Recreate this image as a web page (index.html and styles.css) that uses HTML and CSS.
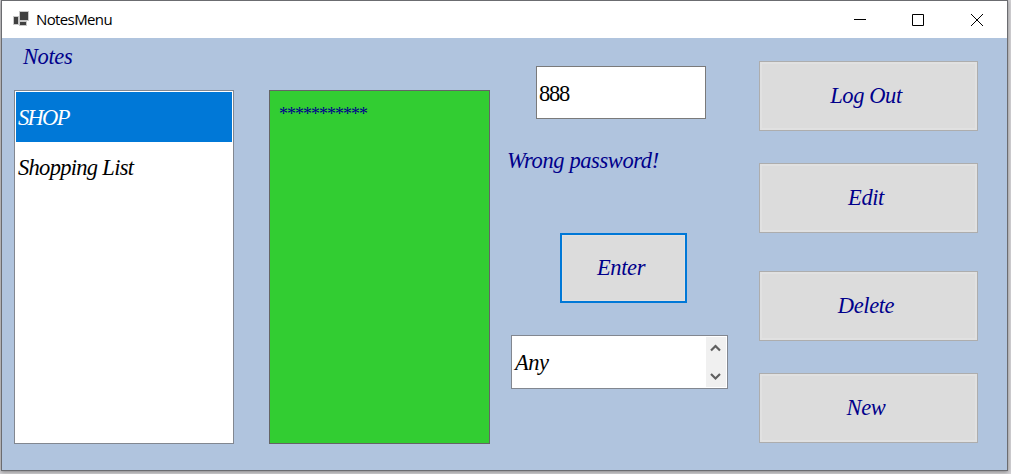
FILE: index.html
```html
<!DOCTYPE html>
<html lang="en">
<head>
<meta charset="utf-8">
<title>NotesMenu</title>
<link rel="stylesheet" href="styles.css">
</head>
<body>
<div class="window">
  <header class="titlebar">
    <svg class="app-icon" width="18" height="16" viewBox="0 0 18 16">
      <path fill="#c8c8c8" d="M0 5h6V0h10v10h-2v5H6v-1H0z"/>
      <path fill="#404040" d="M7 1h8v8H7zM1 6h4v7H1zM7 11h6v3H7z"/>
    </svg>
    <span class="title">NotesMenu</span>
    <svg class="controls" width="130" height="12" viewBox="0 0 130 12" fill="none" stroke="#000">
      <path d="M0 5.5h12M58.5.5h11v11h-11z"/>
      <path d="M117 0l12 12M129 0l-12 12"/>
    </svg>
  </header>
  <main class="form">
    <section class="notes">
      <div class="label notes-label">Notes</div>
      <div class="listbox">
        <div class="item selected">SHOP</div>
        <div class="item">Shopping List</div>
      </div>
    </section>
    <section class="preview">***********</section>
    <section class="password">
      <div class="field">888</div>
      <div class="label message">Wrong password!</div>
      <button class="button enter">Enter</button>
      <div class="spinner">
        <span class="spinner-value">Any</span>
        <svg class="arrows" width="20" height="50" viewBox="0 0 20 50" fill="none" stroke="#606060" stroke-width="2.2">
          <path d="M5 13.500L9.500 9l4.500 4.500M5 37l4.500 4.500L14 37"/>
        </svg>
      </div>
    </section>
    <nav class="actions">
      <button class="button">Log Out</button>
      <button class="button">Edit</button>
      <button class="button delete">Delete</button>
      <button class="button">New</button>
    </nav>
  </main>
</div>
</body>
</html>
```
FILE: styles.css
```css
* { box-sizing: border-box; }
body {
  margin: 0;
  height: 474px;
  padding-left: 1px;
  overflow: hidden;
  background: #d4d3d6;
  font: italic 22.5px/28px "Liberation Serif", serif;
}
.window {
  width: 1007px;
  height: 471px;
  border: 1px solid #6b6c70;
  background: #b0c4de;
  box-shadow: 0 1px 4px rgba(0, 0, 0, .4);
}
.titlebar {
  height: 37px;
  background: #fff;
  display: flex;
  align-items: center;
  padding: 0 23px 0 11px;
}
.app-icon { margin-top: -1px; }
.title {
  margin: -2px 0 0 5px;
  font: 15px/20px "Open Sans", "Noto Sans", sans-serif;
  letter-spacing: -.62px;
  color: #000;
}
.controls { margin-left: auto; }
.form { display: flex; height: 432px; }
.label { color: #00008b; white-space: nowrap; }
.notes { width: 220px; margin-left: 12px; }
.notes-label { height: 52px; padding: 5px 0 0 9px; letter-spacing: -.4px; }
.listbox {
  height: 354px;
  border: 1px solid #828790;
  padding: 1px;
  background: #fff;
}
.item { height: 50px; padding: 12px 0 0 2px; color: #000; letter-spacing: -.7px; }
.selected { background: #0078d7; color: #fff; letter-spacing: -1.7px; }
.preview {
  width: 221px;
  height: 354px;
  margin: 52px 0 0 35px;
  border: 1px solid #646464;
  background: #32cd32;
  color: #00008b;
  padding: 11px 0 0 9px;
  font: 18px/24px "Liberation Serif", serif;
  letter-spacing: -1px;
}
.password { width: 221px; margin: 28px 0 0 17px; }
.field {
  width: 170px;
  height: 53px;
  margin-left: 29px;
  border: 1px solid #7a7a7a;
  background: #fff;
  padding: 13px 0 0 2px;
  font-style: normal;
  letter-spacing: -1.2px;
}
.message { margin-top: 28px; height: 86px; letter-spacing: -.4px; }
.button {
  display: block;
  width: 219px;
  height: 70px;
  margin: 0;
  padding: 0 5px 0 0;
  border: 1px solid #adadad;
  box-shadow: inset 0 0 0 2px #e1e1e1;
  background: #dcdcdc;
  color: #00008b;
  font: inherit;
  letter-spacing: -.4px;
}
.enter {
  width: 127px;
  margin-left: 53px;
  border: 2px solid #0078d7;
  box-shadow: inset 0 0 0 1px #e1e1e1;
}
.spinner {
  width: 217px;
  height: 54px;
  margin: 32px 0 0 4px;
  border: 1px solid #828790;
  background: #fff;
  display: flex;
  justify-content: space-between;
  padding: 1px 1px 1px 3px;
}
.spinner-value { padding-top: 12px; letter-spacing: -.5px; }
.arrows { background: #f0f0f0; }
.actions { margin: 23px 0 0 31px; display: grid; gap: 32px; align-content: start; }
.delete { margin-top: 6px; }
```
